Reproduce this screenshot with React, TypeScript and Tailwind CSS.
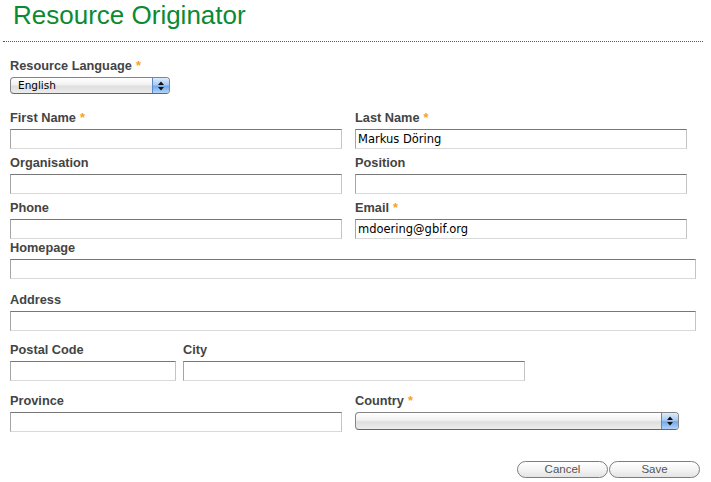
import type { FC, ReactNode } from "react";

const inputCls =
	"block h-5 w-full border border-t-[#777] border-l-[#a5a5a5] border-r-[#c4c4c4] border-b-[#d9d9d9] bg-white px-[2px] text-[11.5px] font-['DejaVu_Sans',sans-serif] text-black outline-none";

const Label: FC<{ children: ReactNode; required?: boolean }> = ({
	children,
	required,
}) => (
	<div className="mb-[3px] h-[17px] whitespace-nowrap pt-[1px] text-[12.75px] leading-4 font-bold text-[#444]">
		{children}
		{required && <span className="ml-[4px] text-[#f5a31c]">*</span>}
	</div>
);

const Field: FC<{
	label: string;
	required?: boolean;
	value?: string;
	className?: string;
}> = ({ label, required, value = "", className = "" }) => (
	<div className={className}>
		<Label required={required}>{label}</Label>
		<input className={inputCls} defaultValue={value} type="text" />
	</div>
);

// aqua style popup button
const Select: FC<{ value?: string; className?: string }> = ({
	value,
	className = "",
}) => (
	<div
		className={`flex overflow-hidden rounded-[4px] border border-[#858585] border-b-[#666] bg-[linear-gradient(to_bottom,#ffffff_0%,#f1f1f1_45%,#dedede_55%,#ececec_100%)] ${className}`}
	>
		<div className="flex-1 pl-[7px] text-[10.5px] leading-[15px] font-['DejaVu_Sans',sans-serif] text-black">
			{value}
		</div>
		<div className="flex w-[17px] items-center justify-center border-l border-[#5d88c4] bg-[linear-gradient(to_bottom,#dcebfb_0%,#a9cbf2_45%,#73a9eb_55%,#b3d3f7_100%)]">
			<svg width="6" height="10" viewBox="0 0 6 10">
				<polygon points="3,0.5 6,4 0,4" fill="#111" />
				<polygon points="0,6 6,6 3,9.5" fill="#111" />
			</svg>
		</div>
	</div>
);

const Button: FC<{ children: ReactNode }> = ({ children }) => (
	<button
		type="button"
		className="h-[17px] w-[91px] rounded-full border border-[#7d7d7d] bg-[linear-gradient(to_bottom,#ffffff_0%,#f4f4f4_50%,#e4e4e4_100%)] text-[11.5px] leading-[15px] text-[#555]"
	>
		{children}
	</button>
);

export default function App() {
	return (
		<div className="h-[482px] w-[711px] overflow-hidden bg-white font-['Liberation_Sans',Arial,sans-serif]">
			<h1 className="h-[30px] pl-[13px] text-[26px] leading-[30px] text-[#0b8a34]">
				Resource Originator
			</h1>
			<div className="mt-[11px] ml-[3px] w-[700px] border-t border-dotted border-[#555]" />

			<div className="px-[10px]">
				<div className="mt-[15px]">
					<Label required>Resource Language</Label>
					<Select value="English" className="h-[17px] w-[160px]" />
				</div>

				<div className="mt-[15px] flex gap-[13px]">
					<Field label="First Name" required className="w-[332px]" />
					<Field
						label="Last Name"
						required
						value="Markus Döring"
						className="w-[332px]"
					/>
				</div>

				<div className="mt-[5px] flex gap-[13px]">
					<Field label="Organisation" className="w-[332px]" />
					<Field label="Position" className="w-[332px]" />
				</div>

				<div className="mt-[5px] flex gap-[13px]">
					<Field label="Phone" className="w-[332px]" />
					<Field
						label="Email"
						required
						value="mdoering@gbif.org"
						className="w-[332px]"
					/>
				</div>

				<Field label="Homepage" className="w-[686px]" />

				<Field label="Address" className="mt-[12px] w-[686px]" />

				<div className="mt-[10px] flex gap-[7px]">
					<Field label="Postal Code" className="w-[166px]" />
					<Field label="City" className="w-[342px]" />
				</div>

				<div className="mt-[11px] flex gap-[13px]">
					<Field label="Province" className="w-[332px]" />
					<div className="w-[324px]">
						<Label required>Country</Label>
						<Select className="h-[18px] w-full" />
					</div>
				</div>

				<div className="mt-[29px] flex justify-end gap-[1px] pr-[1px]">
					<Button>Cancel</Button>
					<Button>Save</Button>
				</div>
			</div>
		</div>
	);
}
